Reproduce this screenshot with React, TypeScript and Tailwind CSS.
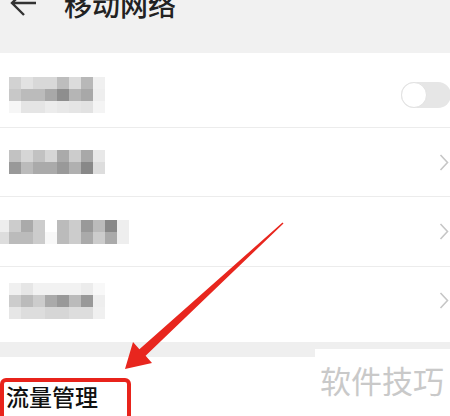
const font = { fontFamily: '"Noto Sans CJK SC", "Noto Sans", sans-serif' };

// blurred (mosaic) labels, one colour per 12px cell
const rowOne = [
  ["#d2d2d2", "#e2e2e2", "#d8d8d8", "#d8d8d8", "#bdbdbd", "#dcdcdc", "#b8b8b8", "#f0f0f0"],
  ["#c8c8c8", "#bbbbbb", "#bbbbbb", "#a8a8a8", "#8e8e8e", "#b5b5b5", "#a8a8a8", "#eeeeee"],
  ["#f6f6f6", "#e5e5e5", "#e5e5e5", "#ececec", "#e8e8e8", "#e5e5e5", "#e2e2e2", "#f4f4f4"],
];
const rowTwo = [
  ["#c2c2c2", "#d6d6d6", "#c2c2c2", "#d6d6d6", "#aaaaaa", "#cccccc", "#a8a8a8", "#e8e8e8"],
  ["#999999", "#bbbbbb", "#aaaaaa", "#aaaaaa", "#999999", "#b0b0b0", "#888888", "#dddddd"],
];
const rowThree = [
  ["#eeeeee", "#cccccc", "#aaaaaa", "#cccccc", "#ffffff", "#bbbbbb", "#cccccc", "#999999", "#bbbbbb", "#888888", "#eeeeee"],
  ["#dddddd", "#bbbbbb", "#bbbbbb", "#cccccc", "#f8f8f8", "#bbbbbb", "#cccccc", "#aaaaaa", "#cccccc", "#aaaaaa", "#eeeeee"],
];
const rowFour = [
  ["#f0f0f0", "#e6e6e6", "#f2f2f2", "#f2f2f2", "#f2f2f2", "#f2f2f2", "#ececec", "#f8f8f8"],
  ["#cccccc", "#bbbbbb", "#cccccc", "#aaaaaa", "#999999", "#bbbbbb", "#999999", "#eeeeee"],
  ["#e6e6e6", "#dddddd", "#dddddd", "#d6d6d6", "#d6d6d6", "#dddddd", "#dddddd", "#f0f0f0"],
];

const Mosaic = ({ cells }: { cells: string[][] }) => (
  <svg width={cells[0].length * 12} height={cells.length * 12} className="blur-[0.6px]">
    {cells.map((row, y) =>
      row.map((c, x) => <rect key={`${x}-${y}`} x={x * 12} y={y * 12} width="12" height="12" fill={c} />)
    )}
  </svg>
);

const Chevron = () => (
  <svg width="10" height="17" viewBox="0 0 10 17" className="ml-auto mr-[1px]">
    <polyline points="1.5,1 8.5,8.5 1.5,16" fill="none" stroke="#c6c6c6" strokeWidth="1.6" />
  </svg>
);

const App = () => {
  return (
    <div className="relative h-[416px] w-[450px] overflow-hidden bg-[#f2f2f2]" style={font}>
      {/* ==== Header ==== */}
      <div className="flex h-[53px] items-start bg-[#f1f1f1]">
        <svg width="30" height="26" viewBox="0 0 30 26" className="-mt-[9px] ml-[8px]">
          <path d="M16 0 L4 12 L16 24 M4 12 H28" fill="none" stroke="#333" strokeWidth="2.4" />
        </svg>
        <span className="-mt-[10px] ml-[26px] text-[28px] leading-none font-medium text-[#222]">移动网络</span>
      </div>

      {/* ==== Settings card ==== */}
      <div className="bg-white">
        <div className="flex h-[75px] items-center border-b border-[#ececec] pt-[10px] pl-[9px]">
          <Mosaic cells={rowOne} />
          <div className="-mr-[1px] ml-auto h-[26px] w-[50px] rounded-full bg-[#e6e6e6]">
            <div className="h-[26px] w-[26px] rounded-full border border-[#e2e2e2] bg-white" />
          </div>
        </div>
        <div className="flex h-[69px] items-center border-b border-[#ececec] pl-[9px]">
          <Mosaic cells={rowTwo} />
          <Chevron />
        </div>
        <div className="flex h-[70px] items-center border-b border-[#ececec] pl-0">
          <div className="-ml-[3px]">
            <Mosaic cells={rowThree} />
          </div>
          <Chevron />
        </div>
        <div className="flex h-[75px] items-center pb-[8px] pl-[9px]">
          <Mosaic cells={rowFour} />
          <Chevron />
        </div>
      </div>

      <div className="h-[15px] bg-[#efefef]" />

      {/* ==== Flow management ==== */}
      <div className="h-[80px] bg-white pt-[21px]">
        <div className="h-[60px] w-[131px] rounded-[6px] border-4 border-[#e8231b] pt-[3px] pl-[2px]">
          <span className="text-[23px] leading-none font-medium text-[#111]">流量管理</span>
        </div>
      </div>

      {/* ==== Watermark ==== */}
      <div className="absolute top-[349px] left-[315px] h-[67px] w-[135px] bg-white pt-[15px] pl-[5px]">
        <span className="text-[31px] leading-none text-[#c9c9c9]">软件技巧</span>
      </div>

      {/* ==== Red annotation arrow ==== */}
      <svg className="pointer-events-none absolute inset-0" width="450" height="416">
        <polygon
          points="283.5,223.6 145.6,355.8 152,363 125,369 133,342 139.4,349.2 282.5,222.4"
          fill="#e8261e"
        />
      </svg>
    </div>
  );
};

export default App;
